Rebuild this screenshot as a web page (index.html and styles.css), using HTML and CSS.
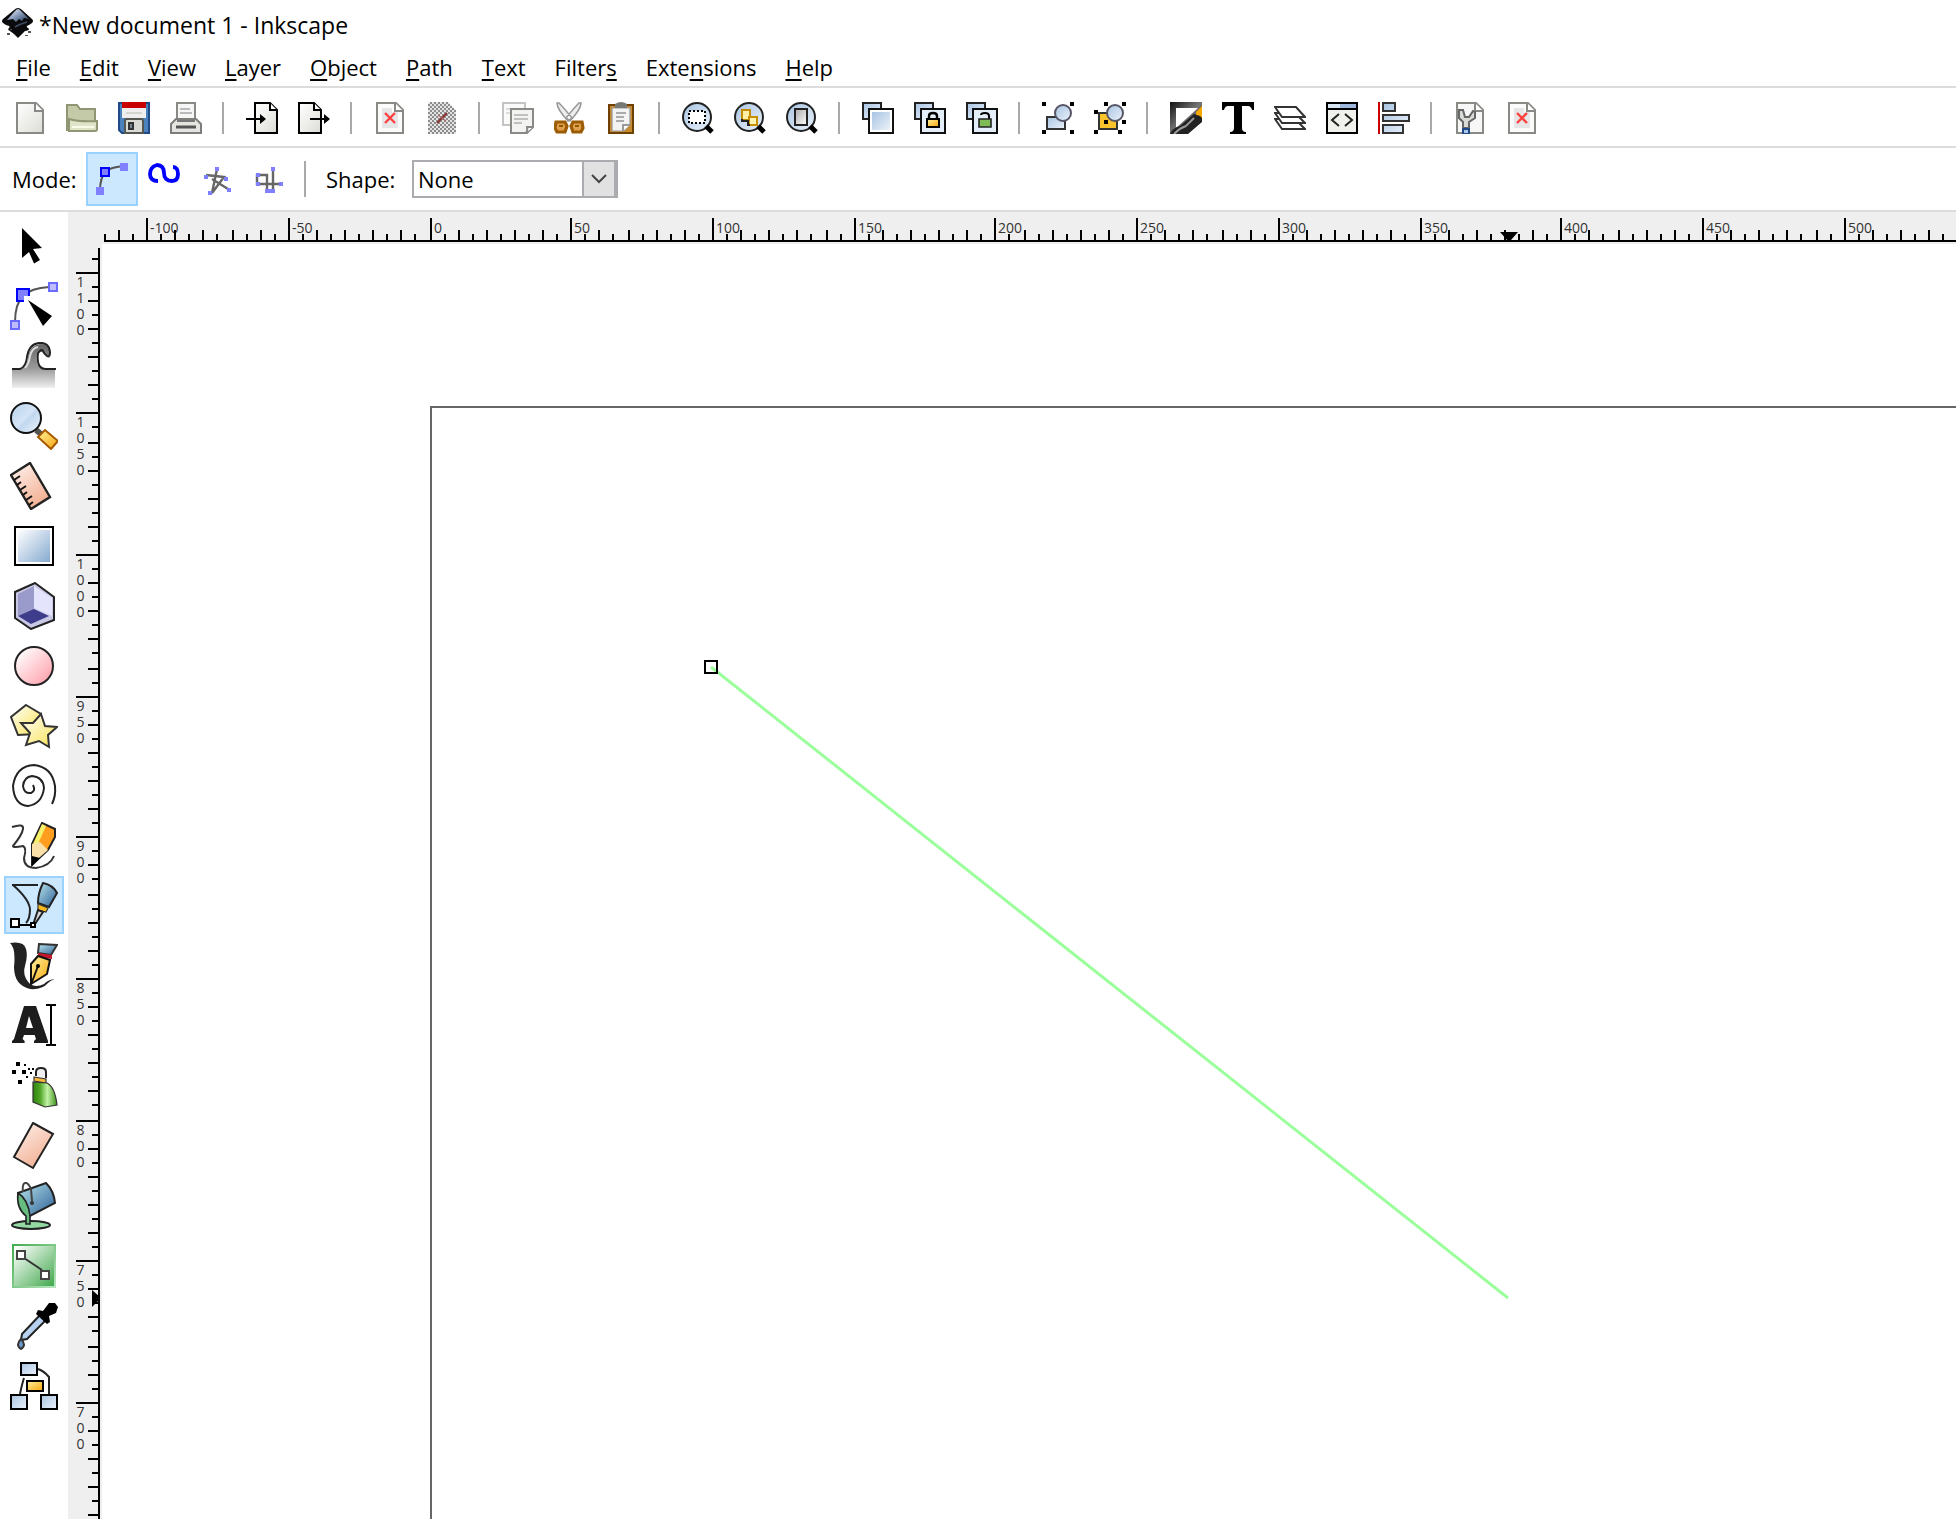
FILE: index.html
```html
<!DOCTYPE html>
<html lang="en">
<head>
<meta charset="utf-8">
<title>*New document 1 - Inkscape</title>
<link rel="stylesheet" href="styles.css">
</head>
<body>
<svg class="defs" aria-hidden="true">
  <defs>
    <linearGradient id="blue" x1="0" y1="0" x2="1" y2="1"><stop offset="0" stop-color="#fff"/><stop offset="1" stop-color="#86aad0"/></linearGradient>
    <linearGradient id="sky" x1="0" y1="0" x2="1" y2="1"><stop offset="0" stop-color="#a9c4e2"/><stop offset="1" stop-color="#eaf2fb"/></linearGradient>
    <linearGradient id="glass" x1="0" y1="0" x2="1" y2="1"><stop offset="0" stop-color="#b9d2ee"/><stop offset=".5" stop-color="#d4e4f5"/><stop offset=".55" stop-color="#c0d7ef"/><stop offset="1" stop-color="#f0f6fc"/></linearGradient>
    <linearGradient id="pink" x1="0" y1="0" x2="1" y2="1"><stop offset=".1" stop-color="#fff"/><stop offset="1" stop-color="#ff98a4"/></linearGradient>
    <linearGradient id="skin" x1="0" y1="0" x2=".6" y2="1"><stop offset="0" stop-color="#fff4f0"/><stop offset="1" stop-color="#f2b093"/></linearGradient>
    <linearGradient id="gold" x1="0" y1="0" x2="1" y2="1"><stop offset="0" stop-color="#fff1a0"/><stop offset="1" stop-color="#f6a609"/></linearGradient>
    <linearGradient id="lemon" x1="0" y1="0" x2="1" y2="1"><stop offset="0" stop-color="#fff"/><stop offset="1" stop-color="#f9e250"/></linearGradient>
    <linearGradient id="green" x1="0" y1="0" x2="1" y2="0"><stop offset="0" stop-color="#2f8410"/><stop offset=".3" stop-color="#4fa626"/><stop offset=".6" stop-color="#c4f3a8"/><stop offset="1" stop-color="#3b8f17"/></linearGradient>
    <linearGradient id="leaf" x1="0" y1="0" x2="1" y2="1"><stop offset=".05" stop-color="#fff"/><stop offset="1" stop-color="#3da648"/></linearGradient>
    <linearGradient id="leafedge" x1="0" y1="0" x2="1" y2="1"><stop offset="0" stop-color="#46ad52"/><stop offset="1" stop-color="#b8e5bd"/></linearGradient>
    <linearGradient id="steel" x1="0" y1="0" x2="1" y2="1"><stop offset="0" stop-color="#b9e6ee"/><stop offset="1" stop-color="#2c5e94"/></linearGradient>
    <linearGradient id="wave" x1="0" y1="0" x2="0" y2="1"><stop offset="0" stop-color="#666"/><stop offset=".55" stop-color="#999"/><stop offset="1" stop-color="#f0f0f0"/></linearGradient>
    <linearGradient id="ink" x1="0" y1="0" x2="1" y2="1"><stop offset="0" stop-color="#111"/><stop offset=".5" stop-color="#777"/><stop offset="1" stop-color="#000"/></linearGradient>
    <linearGradient id="paper" x1="0" y1="0" x2="1" y2="1"><stop offset="0" stop-color="#fff"/><stop offset="1" stop-color="#dcdcd6"/></linearGradient>
    <linearGradient id="grey" x1="0" y1="0" x2="1" y2="1"><stop offset="0" stop-color="#aaa"/><stop offset="1" stop-color="#fff"/></linearGradient>
    <linearGradient id="logo" x1="0" y1="0" x2="1" y2="1"><stop offset="0" stop-color="#fff"/><stop offset=".5" stop-color="#8497b8"/><stop offset="1" stop-color="#1c2c48"/></linearGradient>
    <pattern id="checks" width="2" height="2" patternUnits="userSpaceOnUse"><rect width="2" height="2" fill="#e4e4e4"/><path fill="#8c8c8c" d="M0 0h1v1H0zM1 1h1v1H1z"/></pattern>
  </defs>
</svg>

<header class="titlebar">
  <svg class="logo" viewBox="0 0 32 32"><path d="M16 1q2 0 4 2l10 9q2 2 0 4l-3 2q-4 1-1 3t-3 3l-3 3-4 4-4-4-4-3q-3-1-1-3t-3-3l-3-2q-2-2 0-4l11-9q2-2 4-2z" fill="#0b0b0d"/><path d="M16 2q1 0 3 2l8 8-5-1-2 3-3-2-3 3-3-3-6 1 8-9q2-2 3-2z" fill="url(#logo)"/><path d="M13 20q5-3 12-5" stroke="#3d4b62" stroke-width="1.5" fill="none"/><path d="M5 26h3v2H5zM26 24h3v2h-3zM8 22h2v1H8zM23 28h3v1h-3z" fill="#555"/></svg>
  <h1 class="title">*New document 1 - Inkscape</h1>
</header>

<nav class="menubar">
  <button class="menu"><u>F</u>ile</button>
  <button class="menu"><u>E</u>dit</button>
  <button class="menu"><u>V</u>iew</button>
  <button class="menu"><u>L</u>ayer</button>
  <button class="menu"><u>O</u>bject</button>
  <button class="menu"><u>P</u>ath</button>
  <button class="menu"><u>T</u>ext</button>
  <button class="menu">Filter<u>s</u></button>
  <button class="menu">Exte<u>n</u>sions</button>
  <button class="menu"><u>H</u>elp</button>
</nav>

<div class="commands" role="toolbar" aria-label="Commands">
  <button class="tool" aria-label="New"><svg viewBox="0 0 16 16"><path d="M1.5.5H11l3.500 3.500v11.500h-13z" fill="url(#paper)" stroke="#888a85"/><path d="M10.500.5V4.500h4" fill="#fff" stroke="#888a85"/></svg></button>
  <button class="tool" aria-label="Open"><svg viewBox="0 0 16 16"><path d="M.5 14.500V1.500h5l1.500 2h7.500v6" fill="#c4c9a8" stroke="#8f9674"/><path d="M1.500 14V8.500q5 1.500 14 1v4q0 1-1 1h-13z" fill="#dfe3c8" stroke="#8f9674"/><path d="M3 12.500h11" stroke="#f8faea"/></svg></button>
  <button class="tool" aria-label="Save"><svg viewBox="0 0 16 16"><path d="M.5.5h15v15H2L.5 14z" fill="#4a82bd" stroke="#204a87"/><path d="M2 0h12v8H2z" fill="#eee"/><path d="M2 0h12v3H2z" fill="#c80000"/><path d="M4 5.500h8" stroke="#d5d5d0"/><path d="M3.500 9.500q0-1 1-1h7q1 0 1 1v6h-9z" fill="#d9dad3" stroke="#555753"/><path d="M5.500 10.500h2v3h-2z" fill="#789" stroke="#333"/></svg></button>
  <button class="tool" aria-label="Print"><svg viewBox="0 0 16 16"><path d="M3.500 8.500v-8h9v8" fill="#f6f6f6" stroke="#888a85"/><path d="M5 3.500h5M5 5.500h6" stroke="#bbb"/><path d="M.5 15.500V11l2.500-2.500h10L15.500 11v4.500z" fill="#e4e4e0" stroke="#7c7e79"/><path d="M3.500 9.500h9" stroke="#777"/><path d="M3 12.500h10" stroke="#555" stroke-width="1.5"/></svg></button>
  <hr class="sep">
  <button class="tool" aria-label="Import"><svg viewBox="0 0 16 16"><path d="M4.500.5H12l3.500 3.500v11.500h-11z" fill="url(#paper)" stroke="#000"/><path d="M12 .5V4h3.500" fill="#fff" stroke="#000"/><path d="M0 8.500h8" stroke="#000"/><path d="M7 6l3 2.500L7 11z"/></svg></button>
  <button class="tool" aria-label="Export"><svg viewBox="0 0 16 16"><path d="M.5.5H8L11.500 4v11.500H.5z" fill="url(#paper)" stroke="#000"/><path d="M8 .5V4h3.500" fill="#fff" stroke="#000"/><path d="M6 8.500h8" stroke="#000"/><path d="M13 6l3 2.500L13 11z"/></svg></button>
  <hr class="sep">
  <button class="tool" aria-label="Undo"><svg viewBox="0 0 16 16"><path d="M1.500.5H11l3.500 3.500v11.500h-13z" fill="#fbfbfb" stroke="#888a85"/><path d="M10.500.5V4.500h4" fill="#fff" stroke="#888a85"/><path d="M4 3h5v2h3v8H4z" fill="#e6e6e6"/><path d="M5.500 5.500l5 5M10.500 5.500l-5 5" stroke="#ff4040" stroke-width="1.2"/></svg></button>
  <button class="tool" aria-label="Redo"><svg viewBox="0 0 16 16"><path d="M1 1q0-1 1-1h9l4 4v12H1z" fill="url(#checks)"/><path d="M5.500 10.500l5-5" stroke="#8b3030"/><path d="M6 6.500l4 3" stroke="#a66"  stroke-width=".6"/></svg></button>
  <hr class="sep">
  <button class="tool" aria-label="Copy"><svg viewBox="0 0 16 16"><path d="M.5.500h11v11H.5z" fill="#fafafa" stroke="#c4c4c2"/><path d="M2 3.500h7M2 5.500h3" stroke="#ddd"/><path d="M4.500 3.500h11v9l-3 3h-8z" fill="#f3f3f2" stroke="#888a85"/><path d="M6 6.500h7M6 8.500h7M6 10.500h4" stroke="#c0c0be"/><path d="M12 15.500q1-1 .5-3h3" fill="#fff" stroke="#888a85"/></svg></button>
  <button class="tool" aria-label="Cut"><svg viewBox="0 0 16 16"><path d="M1.500.5q0 3 5.500 9L9 8Q5 3 2.500.5zM13.500.5q0 3-5.500 9L6 8Q10 3 12.500.5z" fill="#eee" stroke="#999" stroke-width=".8"/><g fill="#e0a04c" stroke="#9c5c06" stroke-width="1.6"><path d="M1 10h4.500l1 2-1 3H1.500l-1-2zM14 10H9.500l-1 2 1 3h4l1-2z"/></g><path d="M2.500 12h2M10.500 12h2" stroke="#8f5902"/></svg></button>
  <button class="tool" aria-label="Paste"><svg viewBox="0 0 16 16"><path d="M1.500 1.500h12v14h-12z" fill="#c78a2c" stroke="#704000"/><path d="M3 3h9v8l-3 3.500H3z" fill="#f3f3f3" stroke="#999" stroke-width=".6"/><path d="M4.500 1Q7.500-1 10.500 1v2h-6z" fill="#777a74"/><path d="M5 5.500h5M5 7.500h4M5 9.500h4" stroke="#aaa"/><path d="M8.500 14.500v-3h3.500" fill="#fff" stroke="#999"/></svg></button>
  <hr class="sep">
  <button class="tool" aria-label="Zoom to selection"><svg viewBox="0 0 16 16"><circle cx="7.500" cy="7.500" r="7" fill="url(#sky)" stroke="#222"/><path d="M12 12l3 3" stroke="#000" stroke-width="2.500"/><path d="M3.500 4.500h8v6h-8z" fill="#fff" stroke="#000" stroke-dasharray="1 1"/></svg></button>
  <button class="tool" aria-label="Zoom to drawing"><svg viewBox="0 0 16 16"><circle cx="7.500" cy="7.500" r="7" fill="url(#sky)" stroke="#222"/><path d="M12 12l3 3" stroke="#000" stroke-width="2.500"/><path d="M4 4h4v5H4z" fill="#fff0a8" stroke="#c48a00"/><path d="M7.500 7.500h4v4h-4z" fill="#fff3b0" stroke="#c98f00"/><path d="M4 8.500V9.500h3v2h1" fill="none" stroke="#222"/></svg></button>
  <button class="tool" aria-label="Zoom to page"><svg viewBox="0 0 16 16"><circle cx="7.500" cy="7.500" r="7" fill="url(#sky)" stroke="#222"/><path d="M12 12l3 3" stroke="#000" stroke-width="2.500"/><path d="M4.500 3.500h6v8h-6z" fill="url(#grey)" stroke="#222"/></svg></button>
  <hr class="sep">
  <button class="tool" aria-label="Duplicate"><svg viewBox="0 0 16 16"><path d="M.5.500h9v8h-9z" fill="url(#sky)" stroke="#222"/><path d="M3.500 3.500h12v12h-12z" fill="#fff" stroke="#111"/><path d="M5 5h9v9H5z" fill="url(#sky)"/></svg></button>
  <button class="tool" aria-label="Create clone"><svg viewBox="0 0 16 16"><path d="M.5.500h9v8h-9z" fill="url(#sky)" stroke="#222"/><path d="M3.500 3.500h12v12h-12z" fill="#e4eef8" stroke="#111"/><path d="M7.500 8.500V7q0-1.500 2-1.500t2 1.500v1.500" fill="none" stroke="#000" stroke-width="1.200"/><path d="M6.500 8.500h6v4h-6z" fill="url(#gold)" stroke="#000"/></svg></button>
  <button class="tool" aria-label="Unlink clone"><svg viewBox="0 0 16 16"><path d="M.5.500h9v8h-9z" fill="url(#sky)" stroke="#222"/><path d="M3.500 3.500h12v12h-12z" fill="#e4eef8" stroke="#111"/><path d="M7.500 6.500q0-1 2-1t2 1.500v1.500" fill="none" stroke="#000"/><path d="M6.500 9.500v-1h6v4h-6z" fill="#7dbb55" stroke="#222" stroke-width=".8"/></svg></button>
  <hr class="sep">
  <button class="tool" aria-label="Group"><svg viewBox="0 0 16 16"><path d="M2.500 7.500h8l1 2v4h-9z" fill="url(#sky)" stroke="#333"/><circle cx="10.500" cy="5.500" r="4" fill="url(#sky)" stroke="#556"/><path d="M0 0h2v2H0zM14 0h2v2h-2zM0 14h2v2H0zM14 14h2v2h-2z"/></svg></button>
  <button class="tool" aria-label="Ungroup"><svg viewBox="0 0 16 16"><path d="M2.500 5.500h8l1 4v4h-9z" fill="#fcc42c" stroke="#333"/><circle cx="10.500" cy="5.500" r="4" fill="url(#sky)" stroke="#556"/><path d="M5 0h2v2H5zM14 0h2v2h-2zM0 4h2v2H0zM5 9h2v2H5zM14 9h2v2h-2zM0 14h2v2H0zM12 14h2v2h-2z"/></svg></button>
  <hr class="sep">
  <button class="tool" aria-label="Fill and stroke"><svg viewBox="0 0 16 16"><path d="M0 0h16v3L5 16H0z" fill="url(#ink)"/><path d="M3 3h11L3 13z" fill="#fff"/><path d="M16 2v7l-3-2v-2z" fill="#f5a800"/><path d="M15 7l1 1v2l-7 6H0q1-3 5-4l7-6z" fill="#222"/><path d="M2 16q3-3 6-4l4-4" stroke="#999" fill="none"/></svg></button>
  <button class="tool" aria-label="Text and font"><svg viewBox="0 0 16 16"><path d="M0 0h16v4h-1q-.5-2-2-2h-3v11q0 2 2 2v1H4v-1q2 0 2-2V2H3Q1.500 2 1 4H0z"/></svg></button>
  <button class="tool" aria-label="Layers"><svg viewBox="0 0 16 16"><g fill="#fff" stroke="#333"><path d="M.5 8.500h10l5 5H4z"/><path d="M.5 5.500h10l5 5H4z"/><path d="M.5 2.500h10.500l4.500 5H4z"/></g></svg></button>
  <button class="tool" aria-label="XML editor"><svg viewBox="0 0 16 16"><path d="M.5.500h15v15H.5z" fill="#f0f0ec" stroke="#000"/><path d="M1 1h14v2H1z" fill="#9db8dc"/><path d="M1 1h6v2H1z" fill="#dbe6f5"/><path d="M0 3.500h16" stroke="#000"/><path d="M6.500 6L3 9l3.500 3M9.500 6L13 9l-3.500 3" fill="none" stroke="#222"/></svg></button>
  <button class="tool" aria-label="Align"><svg viewBox="0 0 16 16"><path d="M.5 0v16" stroke="#c00"/><g fill="url(#sky)" stroke="#333"><path d="M2.500.5h6v4h-6zM2.500 6.500h13v3h-13zM2.500 11.500h10v4h-10z"/></g></svg></button>
  <hr class="sep">
  <button class="tool" aria-label="Preferences"><svg viewBox="0 0 16 16"><path d="M1.500.5H11l3.500 3.500v11.500h-13z" fill="#f7f7f7" stroke="#888a85"/><path d="M10.500.5V4.500h4" fill="#fff" stroke="#888a85"/><path d="M2.500 4v4l2 2v3h3v-3l3-2V5l-1-.5-2 3h-2L4.500 4z" fill="#d8dad6" stroke="#666"/><path d="M4.500 13.500h3V16h-3z" fill="#aac6ea" stroke="#204a87"/></svg></button>
  <button class="tool" aria-label="Document properties"><svg viewBox="0 0 16 16"><path d="M1.500.5H11l3.500 3.500v11.500h-13z" fill="#fbfbfb" stroke="#888a85"/><path d="M10.500.5V4.500h4" fill="#fff" stroke="#888a85"/><path d="M4 3h5v2h3v8H4z" fill="#e6e6e6"/><path d="M5.500 5.500l5 5M10.500 5.500l-5 5" stroke="#ff4040" stroke-width="1.2"/></svg></button>
</div>

<div class="options" role="toolbar" aria-label="Pen options">
  <span class="label">Mode:</span>
  <button class="mode active" aria-label="Bezier path"><svg viewBox="0 0 16 16"><path d="M2 14q0-7 3-10 3-2 9-2.500" fill="none" stroke="#555"/><path d="M12 0h4v4h-4zM0 12h4v4H0z" fill="#8080ff"/><path d="M2.500 2.500h4v4h-4z" fill="#8080ff" stroke="#00f"/></svg></button>
  <button class="mode" aria-label="Spiro path"><svg viewBox="0 0 16 16"><path d="M5 9Q1 9 1 5.500T4.500 1Q8 1 8 5t4 4q3 0 3-3.500T12.500 2" fill="none" stroke="#00f" stroke-width="1.9"/></svg></button>
  <button class="mode" aria-label="Straight lines"><svg viewBox="-1 -1 16 16"><path d="M7.500 2L5 14l6-8-9-1M5 7l8 5" fill="none" stroke="#666" stroke-width="1.2"/><path d="M6.500 1h2v2h-2zM11 6h2v2h-2zM1 5h2v2H1zM3 13h2v2H3zM12.500 11.500h2v2h-2z" fill="#8080ff"/></svg></button>
  <button class="mode" aria-label="Paraxial lines"><svg viewBox="-1 -1 16 16"><path d="M9.500 2v11h-3V5h-5v4.500h12" fill="none" stroke="#666" stroke-width="1.2"/><path d="M8.500 1h2v2h-2zM1 4h2v2H1zM1 8.500h2v2H1zM12.500 8.500h2v2h-2zM5.500 12h5v2h-5z" fill="#8080ff"/></svg></button>
  <hr class="sep tall">
  <label class="label" for="shape">Shape:</label>
  <span class="combo">
    <select id="shape"><option>None</option><option>Triangle in</option><option>Triangle out</option><option>Ellipse</option></select>
    <span class="arrow"><svg viewBox="0 0 18 12"><path d="M2 2l7 7 7-7" fill="none" stroke="#444" stroke-width="2"/></svg></span>
  </span>
</div>

<main class="workspace">
  <div class="toolbox" role="toolbar" aria-label="Tools">
    <button class="pick" aria-label="Select"><svg viewBox="0 0 24 24"><path d="M6 3l10 10-4.500.5L15 19l-3 1.800-2.500-5.800L6 18z"/></svg></button>
    <button class="pick" aria-label="Edit nodes"><svg viewBox="0 0 24 24"><path d="M2.500 20q0-9 4-13t13-4.500" fill="none" stroke="#555"/><g fill="#bcbcff" stroke="#6a6aff"><path d="M19.500.5h4v4h-4zM.5 19.500h4v4h-4z"/></g><path d="M3.500 3.500h6v6h-6z" fill="#8080ff" stroke="#00f"/><path d="M7 7h3v3H7z" fill="#fff"/><path d="M9 9l12 8-4.500 5z"/></svg></button>
    <button class="pick" aria-label="Tweak"><svg viewBox="0 0 24 24"><path d="M1 13.500h5q3-2 3-6 1-6 6-6.500 5 0 5 4.500 0 2-2 1-3-3-4.500-1-1 8 4 8h5V23H1z" fill="url(#wave)"/><path d="M1 13.500h4q3-1 3.500-6 1-6.500 6-7t5.500 4.500q0 3-1.500 2t-2-2.500-2.500 1q-1 8 4 8h5" fill="none" stroke="#222"/><path d="M7.500 13q2-2 2.500-6 1-4 4-4.500" stroke="#ddd" fill="none"/></svg></button>
    <button class="pick" aria-label="Zoom"><svg viewBox="0 0 24 24"><path d="M13 14l2.500 2" stroke="#555" stroke-width="3"/><path d="M14 17.500l3.500-3.500 6.500 5.500-3.500 4z" fill="url(#gold)" stroke="#a55a00"/><circle cx="8" cy="8" r="7.500" fill="url(#glass)" stroke="#111"/></svg></button>
    <button class="pick" aria-label="Measure"><svg viewBox="0 0 24 24"><path d="M.5 6.500L10 .5l10 17-9.500 6z" fill="url(#skin)" stroke="#222" stroke-width="1.2"/><path d="M2 9l3-2M3.500 11.500L5.500 10M5 14l3-2M6.500 16.500L8.500 15M8 19l3-2M9.500 21.500l2-1.500" stroke="#111"/></svg></button>
    <button class="pick" aria-label="Rectangle"><svg viewBox="0 0 24 24"><path d="M2.500 2.500h19v19h-19z" fill="#fff" stroke="#000"/><path d="M4 4h16v16H4z" fill="url(#blue)"/></svg></button>
    <button class="pick" aria-label="3D box"><svg viewBox="0 0 24 24"><path d="M12.500.5l9.500 7V19L10.500 23.500 2.500 18V5z" fill="#c9c9e6" stroke="#222"/><path d="M12 2v12l-8 3V6z" fill="#9a9acb"/><path d="M12 2l9 6v9l-9-4z" fill="#e4e4fc"/><path d="M12 13.500l7.500 3.500-9 4L4 17z" fill="#3d3d8c"/></svg></button>
    <button class="pick" aria-label="Ellipse"><svg viewBox="0 0 24 24"><circle cx="12" cy="12" r="9.500" fill="url(#pink)" stroke="#222"/></svg></button>
    <button class="pick" aria-label="Star"><svg viewBox="0 0 24 24"><path d="M8 1.500l7.500 4.500-2 10-9.500.5L.5 7.500z" fill="url(#lemon)" stroke="#333"/><path d="M15.500 6l2 6 6 .5-4.500 4 .5 6-5-3-6.500 2 2-6-4.500-5h6z" fill="url(#lemon)" stroke="#333"/></svg></button>
    <button class="pick" aria-label="Spiral"><svg viewBox="0 0 24 24"><path d="M11.500 11.500q1.500 3-1 4Q7 16 6.500 12 7 7.500 11 7q5.500.5 6 6-1 8-8 9Q2 21.500 1.500 12 3 2 12 1.500 21 2.500 22.500 12q.5 5-1.500 9" fill="none" stroke="#222"/></svg></button>
    <button class="pick" aria-label="Pencil"><svg viewBox="0 0 24 24"><path d="M1 2.500q6-2 5.500 1T1.500 12q0 1 5 0 2 1 .5 6 0 5 6 5 7-1 9-6" fill="none" stroke="#333"/><path d="M16 .5l6.500 3v4L19 14l-8 7.500V11z" fill="#ff9d1e" stroke="#222"/><path d="M16 1l2 1-4 9-2.500 0z" fill="#f5f06a"/><path d="M11 11l4-1 4 4-8 7z" fill="#fbe0a8"/><path d="M11 17v5l4-4z"/></svg></button>
    <button class="pick active" aria-label="Pen"><svg viewBox="0 0 24 24"><path d="M1 1.500h13M1.500 1.500q8 7 8.500 12 0 5-2 7" fill="none" stroke="#222"/><path d="M16.500.5q5 1 7 5l-4 7-5.500-2q0-5 2.500-10z" fill="url(#steel)" stroke="#222"/><path d="M14 11l5 2-1 2-4-1z" fill="#fbb91e" stroke="#333" stroke-width=".6"/><path d="M14 14l2.500 1-4 6-.5-1z" fill="#ddd" stroke="#222"/><path d="M4 21.500h7" stroke="#000"/><path d="M.5 18.500h4v4h-4zM10.500 20.500h2v2h-2z" fill="#fff" stroke="#000"/></svg></button>
    <button class="pick" aria-label="Calligraphy"><svg viewBox="0 0 24 24"><path d="M0 .5q7-1 8 3Q9 7 7.500 12t2.500 9q3 2 7 0 3-3 6-2-2-.5-4 1.500-3 3.500-9 3-8-2-8-11Q3 3 0 .5z" fill="#222"/><path d="M14.500 1l9 .5-3 5-6.500-1z" fill="url(#steel)" stroke="#333"/><path d="M14 5.500l7 1v2l-7-1z" fill="#c4162a"/><path d="M14 7l6 2-1.500 7-8 5V11z" fill="url(#gold)" stroke="#111"/><path d="M14 12l-3 8" stroke="#111"/><circle cx="14" cy="12" r="1"/></svg></button>
    <button class="pick" aria-label="Text"><svg viewBox="0 0 24 24"><path d="M7 2h6l6 17.500v1h-7v-1l1-1-.7-2H7l-.7 2 1 1v1H1v-1l1-1zM9.500 7L8 13h3.500z" fill="#1d1d1d"/><path d="M18 1.500h2q.5 0 .5.500v19q0 .5-.5.500h-2M20.500 2q0-.5.5-.5h2M20.500 21q0 .5.500.5h2" fill="none" stroke="#000"/></svg></button>
    <button class="pick" aria-label="Spray"><svg viewBox="0 0 24 24"><path d="M13 7V5q0-2 2.500-2T18 5v3" fill="#eee" stroke="#222"/><path d="M12 7.500l6 1v2l-6-1z" fill="#f6b83a" stroke="#333" stroke-width=".6"/><path d="M11.500 10l7 .5q4 2 5 11l-6 1-6-2.500z" fill="url(#green)" stroke="#333" stroke-width=".6"/><path d="M3 0h2v2H3zM1 4h2v2H1zM4 9h2v2H4zM6 4h2v2H6zM7 1h1v1H7zM8 7h1v1H8zM9 3h1v1H9zM10 5h1v1h-1zM11 3h1v1h-1z"/></svg></button>
    <button class="pick" aria-label="Eraser"><svg viewBox="0 0 24 24"><path d="M11.500.5l10 5.500-10 17L2 17.500z" fill="url(#skin)" stroke="#222"/></svg></button>
    <button class="pick" aria-label="Paint bucket"><svg viewBox="0 0 24 24"><ellipse cx="10.500" cy="21.500" rx="9.500" ry="2" fill="#92d9a4" stroke="#222"/><path d="M4 5.500L18 .5q4 4 4.500 10L10 17q-5-2-6-11.500z" fill="url(#steel)" stroke="#222"/><path d="M4 5.500q5 3 6 11.500v4H8v-4q-5-4-4-11.500z" fill="#67bd80" stroke="#222" stroke-width=".8"/><path d="M6.500 5q-.5-4 1-4.500t3 3l.5 6" fill="none" stroke="#444"/><circle cx="11" cy="10.500" r="1" fill="#333"/></svg></button>
    <button class="pick" aria-label="Gradient"><svg viewBox="0 0 24 24"><path d="M1.500 1.500h21v21h-21z" fill="url(#leaf)" stroke="url(#leafedge)"/><path d="M7 8l9 6" stroke="#333"/><path d="M3.500 4.500h4v4h-4zM15.500 14.500h4v4h-4z" fill="#fff" stroke="#444"/></svg></button>
    <button class="pick" aria-label="Dropper"><svg viewBox="0 0 24 24"><path d="M15 6.500L6 16l-.5 3 3-.5 9-9z" fill="#b7d2ee" stroke="#222"/><path d="M14 4l2.500.5 3-4h3l1.500 2-1 3-3.500 1.500.5 3-1.500 1L13 6z"/><path d="M5.500 18.500q3 3 0 5-3-2 0-5z" fill="#6d9ace" stroke="#333"/></svg></button>
    <button class="pick" aria-label="Connector"><svg viewBox="0 0 24 24"><path d="M7 8q-1 3-2 8M14 3.500q3 1 5.500 4V16" fill="none" stroke="#222"/><g fill="url(#sky)" stroke="#000"><path d="M5.500.5h8v6h-8z"/><path d="M.5 16.500h8v7h-8z"/><path d="M15.500 16.500h8v7h-8z"/></g><path d="M8.500 9.500h8v5h-8z" fill="url(#gold)" stroke="#000"/></svg></button>
  </div>
  <div class="view">
    <div class="ruler across" id="across"></div>
    <div class="ruler down" id="down"></div>
    <svg class="canvas" role="img" aria-label="Drawing">
      <rect x="329" y="163" width="2970" height="2100" fill="#fff" stroke="#666" stroke-width="2"/>
      <path d="M609 423L1406 1054" stroke="#9bff9b" stroke-width="3"/>
      <path d="M603 417h12v12h-12z" fill="none" stroke="#000" stroke-width="2"/>
    </svg>
  </div>
</main>
<script src="script.js"></script>
</body>
</html>
```
FILE: styles.css
```css
* {
  box-sizing: border-box;
}

body {
  margin: 0;
  height: 100vh;
  display: flex;
  flex-direction: column;
  overflow: hidden;
  background: #fff;
  color: #000;
  font: 22px/28px "Open Sans", "Noto Sans", sans-serif;
}

button {
  margin: 0;
  padding: 0;
  border: 0;
  background: none;
  color: inherit;
  font: inherit;
}

svg {
  display: block;
}

.defs {
  position: absolute;
  width: 0;
  height: 0;
}

.titlebar {
  display: flex;
  align-items: center;
  gap: 5px;
  height: 50px;
  padding-left: 2px;
}

.logo {
  width: 32px;
  height: 32px;
  margin-bottom: 4px;
}

.title {
  margin: 0;
  font-size: 23px;
  font-weight: 400;
}

.menubar {
  display: flex;
  gap: 29px;
  height: 38px;
  padding: 3px 16px 0;
  border-bottom: 2px solid #dcdcdc;
}

.menu {
  height: 28px;
}

.menu u {
  text-decoration-thickness: 2px;
  text-underline-offset: 3px;
  text-decoration-skip-ink: none;
}

.commands,
.options {
  display: flex;
  align-items: center;
  border-bottom: 2px solid #dcdcdc;
}

.commands {
  height: 60px;
  padding: 2px 0 0 4px;
}

.tool {
  flex: none;
  width: 52px;
  padding: 10px;
}

.tool svg,
.mode svg {
  width: 32px;
  height: 32px;
}

.sep {
  flex: none;
  width: 2px;
  height: 32px;
  margin: 0 12px 0 10px;
  border: 0;
  background: #a9a9a9;
}

.sep.tall {
  height: 36px;
  margin: 0 20px 0 10px;
}

.options {
  height: 64px;
  padding-left: 12px;
}

.options .label {
  flex: none;
}

.options .label:first-child {
  width: 74px;
}

.options label {
  width: 86px;
}

.mode {
  flex: none;
  width: 52px;
  height: 54px;
  padding: 9px 8px;
  border: 2px solid transparent;
}

.combo {
  position: relative;
  width: 206px;
  height: 38px;
}

.combo select {
  appearance: none;
  width: 100%;
  height: 100%;
  padding: 0 36px 0 4px;
  border: 2px solid #acacb0;
  border-radius: 0;
  background: #fff;
  color: #000;
  font: inherit;
}

.arrow {
  position: absolute;
  top: 2px;
  right: 2px;
  bottom: 2px;
  width: 34px;
  display: grid;
  place-items: center;
  border: 2px solid #acacb0;
  border-top-width: 0;
  border-bottom-width: 0;
  background: #e1e1e1;
  pointer-events: none;
}

.arrow svg {
  width: 18px;
  height: 12px;
}

.workspace {
  flex: 1;
  min-height: 0;
  display: flex;
}

.toolbox {
  flex: none;
  width: 68px;
  display: flex;
  flex-direction: column;
  gap: 2px;
  padding: 4px 4px 0;
}

.pick {
  flex: none;
  width: 60px;
  height: 58px;
  padding: 4px 4px 2px;
  border: 2px solid transparent;
}

.pick svg {
  width: 48px;
  height: 48px;
}

.mode.active,
.pick.active {
  border-color: #99d1ff;
  background: #cce8ff;
}

.view {
  flex: 1;
  min-width: 0;
  display: grid;
  grid-template-columns: 34px 1fr;
  grid-template-rows: 32px 1fr;
  background: #efefef;
}

.ruler {
  position: relative;
  overflow: hidden;
  color: #333;
  font-size: 14px;
  line-height: 16px;
}

.ruler i,
.ruler span,
.marker {
  position: absolute;
}

.ruler i {
  background: #000;
}

.across {
  grid-column: 1 / 3;
  margin-left: 36px;
  border-bottom: 2px solid #efefef;
  box-shadow: inset 0 -2px #000;
}

.across i {
  bottom: 0;
  width: 2px;
  height: 8px;
}

.across .medium {
  height: 12px;
}

.across .major {
  height: 24px;
}

.across span {
  top: 8px;
}

.down {
  margin-top: 4px;
  border-right: 2px solid #efefef;
  box-shadow: inset -2px 0 #000;
}

.down i {
  right: 0;
  width: 8px;
  height: 2px;
}

.down .medium {
  width: 12px;
}

.down .major {
  width: 24px;
}

.down span {
  left: 8px;
  width: 9px;
  text-align: center;
  word-break: break-all;
}

.canvas {
  width: 100%;
  height: 100%;
  background: #fff;
}
```
FILE: script.js
```js
// Fills both rulers with ticks every 5 units and a label every 50 units.
const even = (n) => Math.floor(n / 2) * 2;

function fill(ruler, side, origin, step, first, count, gap, valueAt) {
  for (let k = first; k < count; k++) {
    const at = even(origin + k * step);
    const tick = document.createElement('i');
    tick.style[side] = at + 'px';
    if (k % 10 === 0) {
      tick.className = 'major';
      const label = document.createElement('span');
      label.textContent = valueAt(k / 10);
      label.style[side] = at + gap + 'px';
      ruler.append(label);
    } else if (k % 2 === 0) {
      tick.className = 'medium';
    }
    ruler.append(tick);
  }
}

function marker(ruler, css, points) {
  ruler.insertAdjacentHTML('beforeend',
    `<svg class="marker" style="${css}" width="18" height="18"><path d="${points}"/></svg>`);
}

const across = document.getElementById('across');
const down = document.getElementById('down');

fill(across, 'left', 326.1, 14.142, -23, Math.ceil((across.clientWidth - 326) / 14.142), 4, (n) => n * 50);
fill(down, 'top', 24.6, 14.125, -1, Math.ceil(down.clientHeight / 14.125), 2, (n) => 1100 - n * 50);

marker(across, 'left:1396px;bottom:0', 'M0 8h18l-7 8v2H7v-2z');
marker(down, 'top:1042px;right:0', 'M10 0l8 7v2l-8 8z');
```
